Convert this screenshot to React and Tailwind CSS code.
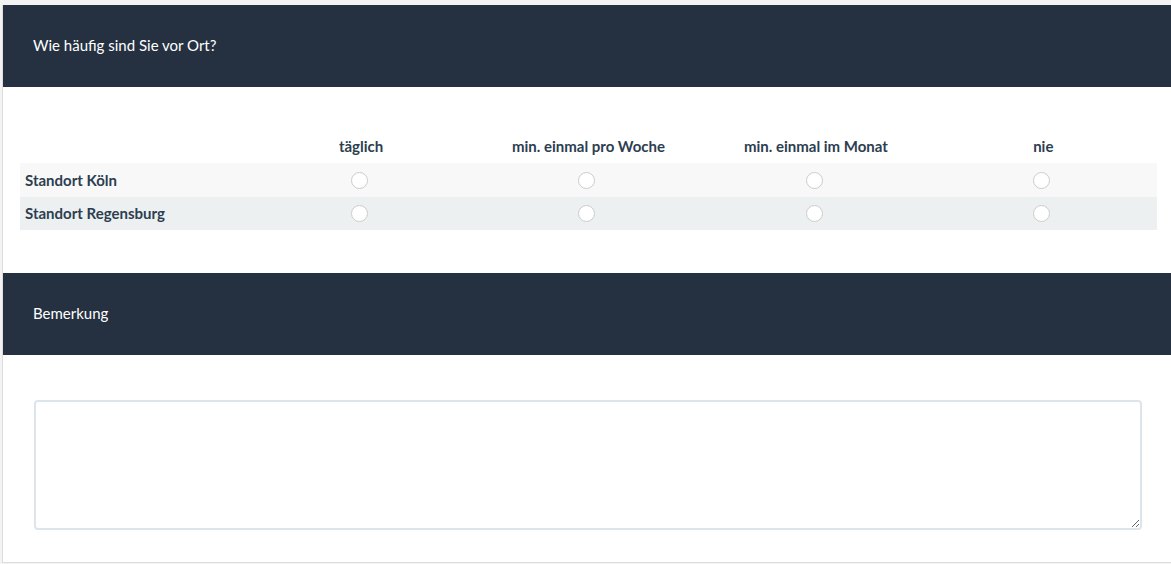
import { useState } from "react";

const spalten = ["täglich", "min. einmal pro Woche", "min. einmal im Monat", "nie"];

const standorte = [
  { id: "koeln", name: "Standort Köln", bg: "bg-[#f8f8f8]", h: "h-[34px]" },
  { id: "regensburg", name: "Standort Regensburg", bg: "bg-[#ecf0f1]", h: "h-[33px]" },
];

function Abschnitt({ titel }) {
  return (
    <div className="flex h-[82px] items-center bg-[#253141] px-[30px] pb-[2px] text-[15px] text-white">
      {titel}
    </div>
  );
}

export default function App() {
  const [antworten, setAntworten] = useState({});
  const [bemerkung, setBemerkung] = useState("");

  return (
    <div
      className="min-h-[564px] bg-[#f3f3f3] pl-[2px] pt-[5px] text-[#2c3e50]"
      style={{ fontFamily: "Lato, 'Noto Sans', sans-serif" }}
    >
      <div className="border-b border-l border-[#dddddd] bg-white">
        <Abschnitt titel="Wie häufig sind Sie vor Ort?" />

        {/* Matrix mit Radio-Auswahl je Standort */}
        <div className="pb-[43px] pl-[17px] pr-[14px] pt-[47px]">
          <div className="grid h-[29px] grid-cols-5 items-center pb-[4px] text-[15px] font-bold">
            <div />
            {spalten.map((s) => (
              <div key={s} className="text-center">
                {s}
              </div>
            ))}
          </div>
          {standorte.map((st) => (
            <div key={st.id} className={`grid grid-cols-5 items-center ${st.bg} ${st.h}`}>
              <div className="pl-[5px] text-[15px] font-bold">{st.name}</div>
              {spalten.map((s) => (
                <div key={s} className="flex justify-center pr-[3px]">
                  <input
                    type="radio"
                    name={st.id}
                    checked={antworten[st.id] === s}
                    onChange={() => setAntworten((a) => ({ ...a, [st.id]: s }))}
                    className="h-[17px] w-[17px] appearance-none rounded-full border border-[#cccccc] bg-white checked:border-[5px] checked:border-[#2c3e50]"
                  />
                </div>
              ))}
            </div>
          ))}
        </div>

        <Abschnitt titel="Bemerkung" />

        <div className="pb-[32px] pl-[31px] pr-[29px] pt-[45px]">
          <textarea
            value={bemerkung}
            onChange={(e) => setBemerkung(e.target.value)}
            className="block h-[130px] w-full rounded-[4px] border-2 border-[#dce4ec] bg-white p-2 text-[15px] outline-none"
          />
        </div>
      </div>
    </div>
  );
}
